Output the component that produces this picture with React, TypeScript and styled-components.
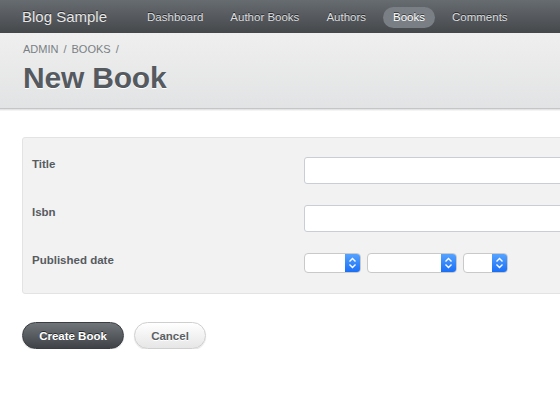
import React from "react";
import styled, { createGlobalStyle } from "styled-components";

const Global = createGlobalStyle`
  html, body { margin: 0; padding: 0; background: #fff; overflow: hidden; }
  body { font-family: "Liberation Sans", Arial, Helvetica, sans-serif; }
  * { box-sizing: border-box; }
`;

const Page = styled.div`
  width: 760px;
`;

const NavBar = styled.nav`
  height: 33px;
  background: linear-gradient(#676c71, #45484b);
  display: flex;
  align-items: center;
  padding-left: 22px;
  gap: 30px;
`;

const Brand = styled.div`
  color: #e6e6e6;
  font-size: 15px;
  text-shadow: 0 -1px 0 rgba(0, 0, 0, 0.5);
`;

const NavList = styled.div`
  display: flex;
  gap: 7px;
  align-items: center;
`;

const NavLink = styled.a<{ $active?: boolean }>`
  display: block;
  height: 21px;
  line-height: 21px;
  padding: 0 10px;
  border-radius: 11px;
  font-size: 11.5px;
  color: ${(p) => (p.$active ? "#fff" : "#dcdddf")};
  background: ${(p) => (p.$active ? "#7a7f85" : "transparent")};
  text-shadow: 0 -1px 0 rgba(0, 0, 0, 0.6);
  margin-top: 2px;
`;

const Header = styled.header`
  height: 76px;
  background: linear-gradient(#efefef, #e2e3e4);
  border-bottom: 1px solid #c4c5c6;
  box-shadow: 0 1px 0 #e4e4e4, 0 2px 0 #f4f4f4;
  padding: 10px 22px 0 23px;
`;

const Crumbs = styled.div`
  font-size: 11px;
  color: #7a7f84;
  text-transform: uppercase;
  display: flex;
  gap: 5px;
`;

const Title = styled.h1`
  margin: 6px 0 0;
  font-size: 30px;
  font-weight: bold;
  color: #555a60;
  text-shadow: 0 1px 0 #fff;
  letter-spacing: -0.2px;
`;

const Main = styled.main`
  padding: 28px 0 0 22px;
`;

const Panel = styled.div`
  background: #f2f2f2;
  border: 1px solid #e3e3e3;
  border-radius: 3px;
  padding: 19px 9px 20px;
  display: grid;
  grid-template-columns: 272px 1fr;
  row-gap: 21px;
`;

const Label = styled.label`
  font-size: 11.5px;
  font-weight: bold;
  color: #565b61;
  padding-top: 1px;
`;

const TextInput = styled.div`
  height: 27px;
  background: #fff;
  border: 1px solid #c8ced5;
  border-radius: 3px;
  width: 400px;
`;

const SelectRow = styled.div`
  display: flex;
  gap: 6px;
  height: 20px;
`;

const Select = styled.div<{ $w: number }>`
  width: ${(p) => p.$w}px;
  height: 20px;
  background: #fff;
  border: 1px solid #c9c9c9;
  border-radius: 4px;
  display: flex;
  justify-content: flex-end;
  overflow: hidden;
`;

const Arrow = styled.div`
  width: 15px;
  height: 100%;
  background: linear-gradient(#55a3ff, #1a6ff6);
  display: flex;
  align-items: center;
  justify-content: center;
`;

const Actions = styled.div`
  display: flex;
  gap: 10px;
  margin-top: 28px;
`;

const Button = styled.button<{ $primary?: boolean }>`
  height: 27px;
  border-radius: 14px;
  font-family: inherit;
  font-size: 11.5px;
  font-weight: bold;
  padding: 0;
  width: ${(p) => (p.$primary ? "102px" : "72px")};
  color: ${(p) => (p.$primary ? "#fff" : "#5b5f64")};
  border: 1px solid ${(p) => (p.$primary ? "#3a3d41" : "#cfcfcf")};
  background: ${(p) =>
    p.$primary
      ? "linear-gradient(#70757a, #3f4347)"
      : "linear-gradient(#ffffff, #e6e6e6)"};
  text-shadow: ${(p) =>
    p.$primary ? "0 -1px 0 rgba(0,0,0,0.6)" : "0 1px 0 #fff"};
  box-shadow: 0 1px 1px rgba(0, 0, 0, 0.12);
`;

const Chevrons = () => (
  <svg width="9" height="12" viewBox="0 0 9 12" fill="none">
    <path d="M1.5 4.5 L4.5 1.5 L7.5 4.5" stroke="#fff" strokeWidth="1.4" />
    <path d="M1.5 7.5 L4.5 10.5 L7.5 7.5" stroke="#fff" strokeWidth="1.4" />
  </svg>
);

export default function App() {
  return (
    <Page>
      <Global />
      <NavBar>
        <Brand>Blog Sample</Brand>
        <NavList>
          <NavLink>Dashboard</NavLink>
          <NavLink>Author Books</NavLink>
          <NavLink>Authors</NavLink>
          <NavLink $active>Books</NavLink>
          <NavLink>Comments</NavLink>
        </NavList>
      </NavBar>
      <Header>
        <Crumbs>
          <span>Admin</span>
          <span>/</span>
          <span>Books</span>
          <span>/</span>
        </Crumbs>
        <Title>New Book</Title>
      </Header>
      <Main>
        <Panel>
          <Label>Title</Label>
          <TextInput />
          <Label>Isbn</Label>
          <TextInput />
          <Label>Published date</Label>
          <SelectRow>
            <Select $w={57}>
              <Arrow><Chevrons /></Arrow>
            </Select>
            <Select $w={90}>
              <Arrow><Chevrons /></Arrow>
            </Select>
            <Select $w={45}>
              <Arrow><Chevrons /></Arrow>
            </Select>
          </SelectRow>
        </Panel>
        <Actions>
          <Button $primary>Create Book</Button>
          <Button>Cancel</Button>
        </Actions>
      </Main>
    </Page>
  );
}
